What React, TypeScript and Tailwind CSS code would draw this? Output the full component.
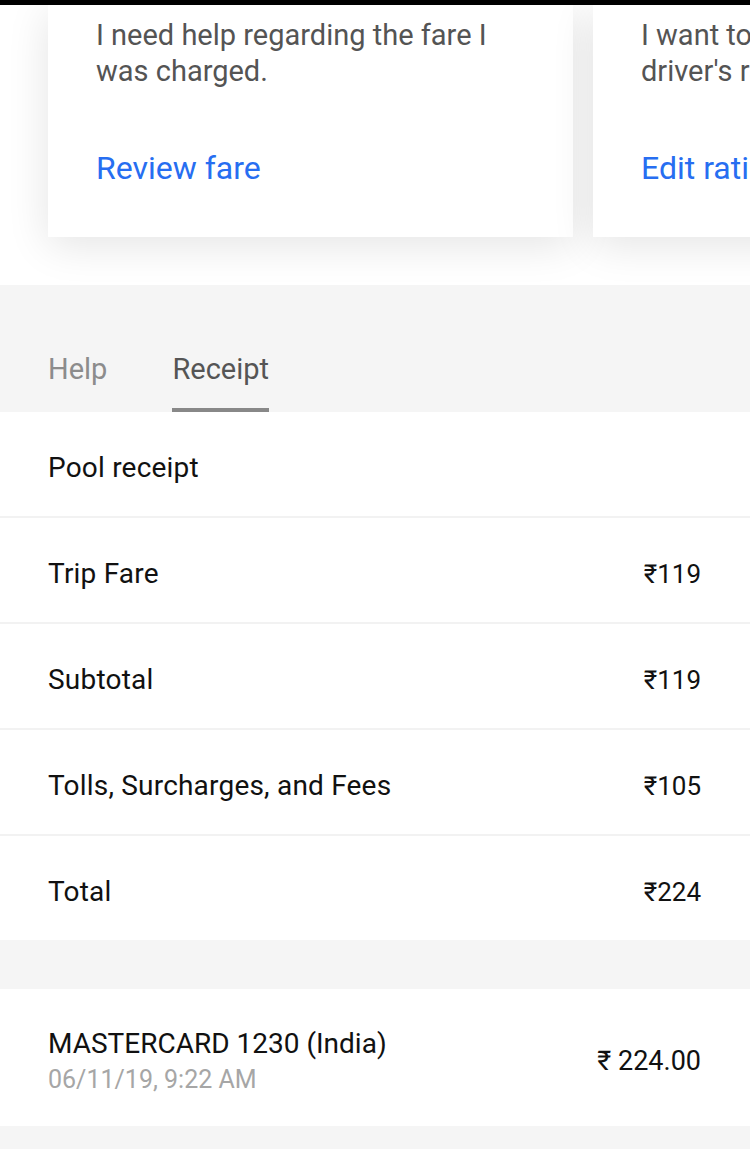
export default function App() {
  const rows = [
    { label: "Trip Fare", value: "₹119" },
    { label: "Subtotal", value: "₹119" },
    { label: "Tolls, Surcharges, and Fees", value: "₹105" },
    { label: "Total", value: "₹224" },
  ];

  return (
    <div className="w-[750px] h-[1149px] overflow-hidden bg-white font-['Roboto','Noto_Sans','DejaVu_Sans',sans-serif]">
      <div className="h-[5px] bg-black" />

      {/* help cards, scrolled horizontally */}
      <div className="h-[280px] bg-white overflow-hidden flex gap-5 pl-12">
        <div className="w-[525px] shrink-0 h-[232px] bg-white shadow-[0_8px_40px_rgba(0,0,0,0.11)] pl-12 pt-3">
          <p className="text-[29px] leading-[36px] text-[#545454] w-[410px]">
            I need help regarding the fare I was charged.
          </p>
          <p className="mt-[61px] text-[32px] leading-[36px] text-[#276ef1]">
            Review fare
          </p>
        </div>
        <div className="w-[525px] shrink-0 h-[232px] bg-white shadow-[0_8px_40px_rgba(0,0,0,0.11)] pl-12 pt-3">
          <p className="text-[29px] leading-[36px] text-[#545454] w-[410px]">
            I want to change my
            <br />
            driver's rating.
          </p>
          <p className="mt-[61px] text-[32px] leading-[36px] text-[#276ef1]">
            Edit rating
          </p>
        </div>
      </div>

      {/* tabs */}
      <div className="bg-[#f5f5f5] pt-[66px] pl-12 flex gap-[65px]">
        <div className="flex flex-col">
          <span className="text-[29px] leading-[36px] text-[#8c8c8c] pb-[21px]">Help</span>
          <div className="h-1" />
        </div>
        <div className="flex flex-col">
          <span className="text-[29px] leading-[36px] text-[#555555] pb-[21px]">Receipt</span>
          <div className="h-1 bg-[#888888]" />
        </div>
      </div>

      {/* receipt */}
      <div className="bg-white">
        <div className="h-[106px] flex items-center px-12 pt-2 border-b-2 border-[#f2f2f2]">
          <span className="text-[28px] tracking-[0.2px] text-[#111111]">Pool receipt</span>
        </div>
        {rows.map((r, i) => (
          <div
            key={r.label}
            className={
              i < rows.length - 1
                ? "h-[106px] flex items-center justify-between pl-12 pr-[49px] pt-2 border-b-2 border-[#f2f2f2]"
                : "h-[104px] flex items-center justify-between pl-12 pr-[49px] pt-2"
            }
          >
            <span className="text-[28px] tracking-[0.2px] text-[#111111]">{r.label}</span>
            <span className="text-[26px] text-[#111111]">{r.value}</span>
          </div>
        ))}
      </div>

      <div className="h-[49px] bg-[#f5f5f5]" />

      <div className="h-[137px] bg-white flex items-center justify-between pl-12 pr-[49px] pt-2">
        <div className="flex flex-col">
          <span className="text-[28px] leading-[36px] text-[#111111]">MASTERCARD 1230 (India)</span>
          <span className="text-[25px] leading-[36px] text-[#a6a6a6]">06/11/19, 9:22 AM</span>
        </div>
        <span className="text-[27px] text-[#111111]">₹ 224.00</span>
      </div>

      <div className="h-[40px] bg-[#f5f5f5]" />
    </div>
  );
}
